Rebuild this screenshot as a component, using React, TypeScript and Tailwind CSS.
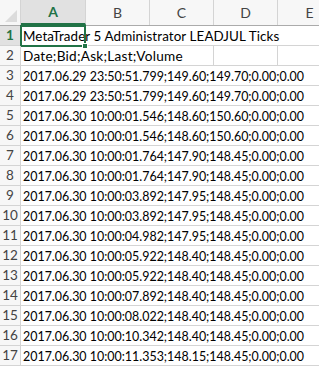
import React from "react";

const rows: string[] = [
  "MetaTrader 5 Administrator LEADJUL Ticks",
  "Date;Bid;Ask;Last;Volume",
  "2017.06.29 23:50:51.799;149.60;149.70;0.00;0.00",
  "2017.06.29 23:50:51.799;149.60;149.70;0.00;0.00",
  "2017.06.30 10:00:01.546;148.60;150.60;0.00;0.00",
  "2017.06.30 10:00:01.546;148.60;150.60;0.00;0.00",
  "2017.06.30 10:00:01.764;147.90;148.45;0.00;0.00",
  "2017.06.30 10:00:01.764;147.90;148.45;0.00;0.00",
  "2017.06.30 10:00:03.892;147.95;148.45;0.00;0.00",
  "2017.06.30 10:00:03.892;147.95;148.45;0.00;0.00",
  "2017.06.30 10:00:04.982;147.95;148.45;0.00;0.00",
  "2017.06.30 10:00:05.922;148.40;148.45;0.00;0.00",
  "2017.06.30 10:00:05.922;148.40;148.45;0.00;0.00",
  "2017.06.30 10:00:07.892;148.40;148.45;0.00;0.00",
  "2017.06.30 10:00:08.022;148.40;148.45;0.00;0.00",
  "2017.06.30 10:00:10.342;148.40;148.45;0.00;0.00",
  "2017.06.30 10:00:11.353;148.15;148.45;0.00;0.00",
];

// number of columns covered by overflow text (1 = A only)
const span = (i: number) => (i === 1 ? 3 : 5);

const colWidths = ["w-[65px]", "w-[64px]", "w-[64px]", "w-[64px]", "w-[64px]"];
const letters = ["A", "B", "C", "D", "E"];

const textClass = (r: number) =>
  r === 0
    ? "text-[13.4px] tracking-[0.1px]"
    : r === 1
    ? "text-[13.6px] tracking-[0.25px]"
    : "text-[12.45px]";

export default function App() {
  return (
    <div
      className="w-[319px] h-[368px] overflow-hidden bg-white text-black"
      style={{ fontFamily: "Lato, 'Noto Sans', sans-serif" }}
    >
      {/* header row */}
      <div className="flex h-[26px] border-b border-[#ababab] bg-[#f7f7f7]">
        <div className="relative w-[21px] shrink-0 border-r border-[#d4d4d4]">
          <svg className="absolute right-[3px] bottom-[3px]" width="12" height="12" viewBox="0 0 12 12">
            <polygon points="12,0 12,12 0,12" fill="#dcdcdc" />
          </svg>
        </div>
        {letters.map((l, i) => (
          <div
            key={l}
            className={
              "shrink-0 flex items-center justify-center text-[14px] border-r " +
              colWidths[i] +
              (i === 0
                ? " bg-[#e1e1e1] text-[#217346] font-bold border-[#d4d4d4] border-b-2 border-b-[#217346]"
                : " text-[#444444] border-[#d4d4d4]")
            }
          >
            {l}
          </div>
        ))}
      </div>
      {rows.map((t, r) => {
        const s = span(r);
        return (
          <div key={r} className="relative flex h-[20px] border-b border-[#d4d4d4]">
            <div
              className={
                "w-[21px] shrink-0 flex items-center justify-center text-[13.5px] border-r " +
                (r === 0
                  ? "bg-[#e1e1e1] text-[#217346] font-bold border-[#217346]"
                  : "bg-[#f7f7f7] text-[#444444] border-[#d4d4d4]")
              }
            >
              {r + 1}
            </div>
            {letters.map((l, i) => (
              <div
                key={l}
                className={
                  "shrink-0 h-full border-r " +
                  colWidths[i] +
                  (i < s - 1 ? " border-transparent" : " border-[#d4d4d4]")
                }
              >
                {i === 0 && t ? (
                  <div className={"pl-[2px] pt-[2px] whitespace-nowrap leading-[17px] " + textClass(r)}>
                    {t}
                  </div>
                ) : null}
              </div>
            ))}
            {r === 0 ? (
              <div className="absolute left-[20px] top-[-1px] w-[66px] h-[22px] border-2 border-[#217346] pointer-events-none">
                <div className="absolute right-[-4px] bottom-[-4px] w-[6px] h-[6px] bg-[#217346] border border-white" />
              </div>
            ) : null}
          </div>
        );
      })}
    </div>
  );
}
